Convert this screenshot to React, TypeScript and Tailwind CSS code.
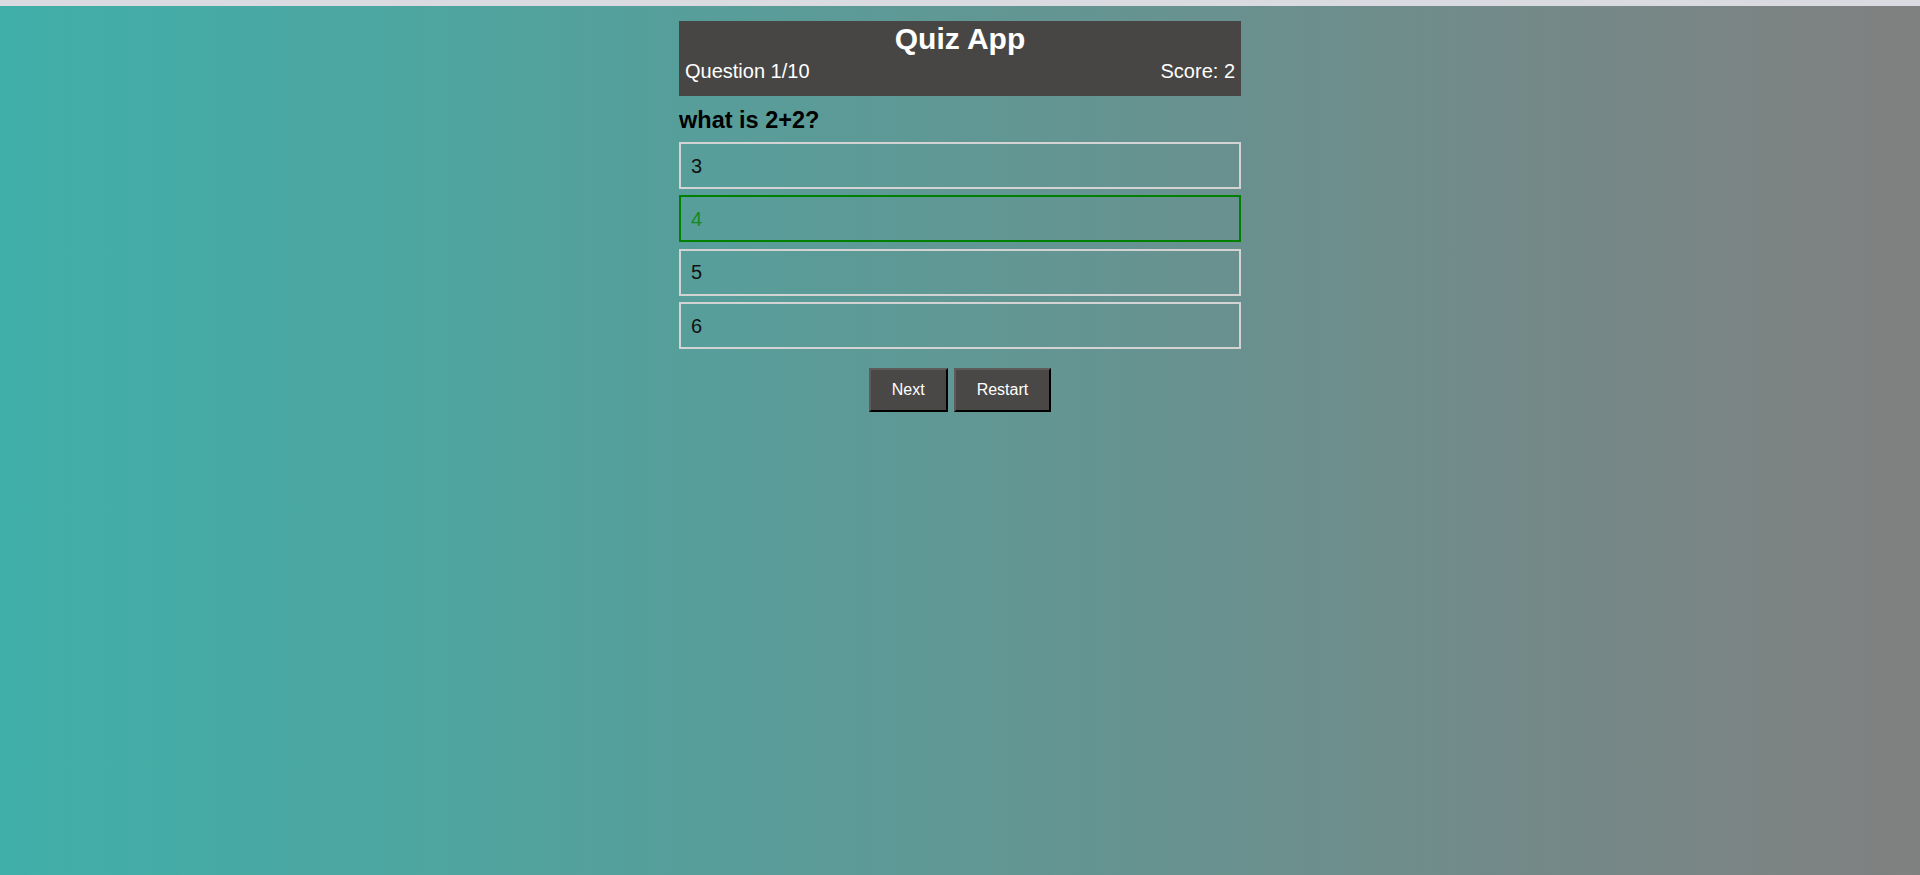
import React from "react"

const options = ["3", "4", "5", "6"]
const correct = "4"

const App = () => (
  <div
    className="min-h-[875px] w-full bg-[linear-gradient(to_right,#40afa9,#808080)]"
    style={{ fontFamily: '"Liberation Sans", Arial, sans-serif' }}
  >
    <div className="h-[6px] bg-[#dadbe0]" />
    <div className="w-[562px] mx-auto mt-[15px]">
      <div className="bg-[#484644] text-white pt-[1px] pb-[13px] px-[6px]">
        <h1 className="text-[30px] leading-[34px] font-bold text-center">Quiz App</h1>
        <div className="flex justify-between text-[20px] leading-[23px] mt-[4px]">
          <span>Question 1/10</span>
          <span>Score: 2</span>
        </div>
      </div>
      <h2 className="text-[23.5px] leading-[27px] font-bold text-black mt-[11px] mb-[8px]">what is 2+2?</h2>
      <div className="flex flex-col gap-[6.4px]">
        {options.map(opt => (
          <div
            key={opt}
            className={
              opt === correct
                ? "h-[47px] border-2 border-[#008000] text-[#138a1f] flex items-center px-[10px] text-[20px]"
                : "h-[47px] border-2 border-[#d3d3d3] text-[#111] flex items-center px-[10px] text-[20px]"
            }
          >
            {opt}
          </div>
        ))}
      </div>
      <div className="flex justify-center gap-[6px] mt-[19px]">
        <button className="bg-[#4a4846] text-white text-[16px] leading-[18px] px-[21px] py-[11px] border-2 border-t-[#5e5c5a] border-l-[#5e5c5a] border-r-black border-b-black">
          Next
        </button>
        <button className="bg-[#4a4846] text-white text-[16px] leading-[18px] px-[21px] py-[11px] border-2 border-t-[#5e5c5a] border-l-[#5e5c5a] border-r-black border-b-black">
          Restart
        </button>
      </div>
    </div>
  </div>
)

export default App
